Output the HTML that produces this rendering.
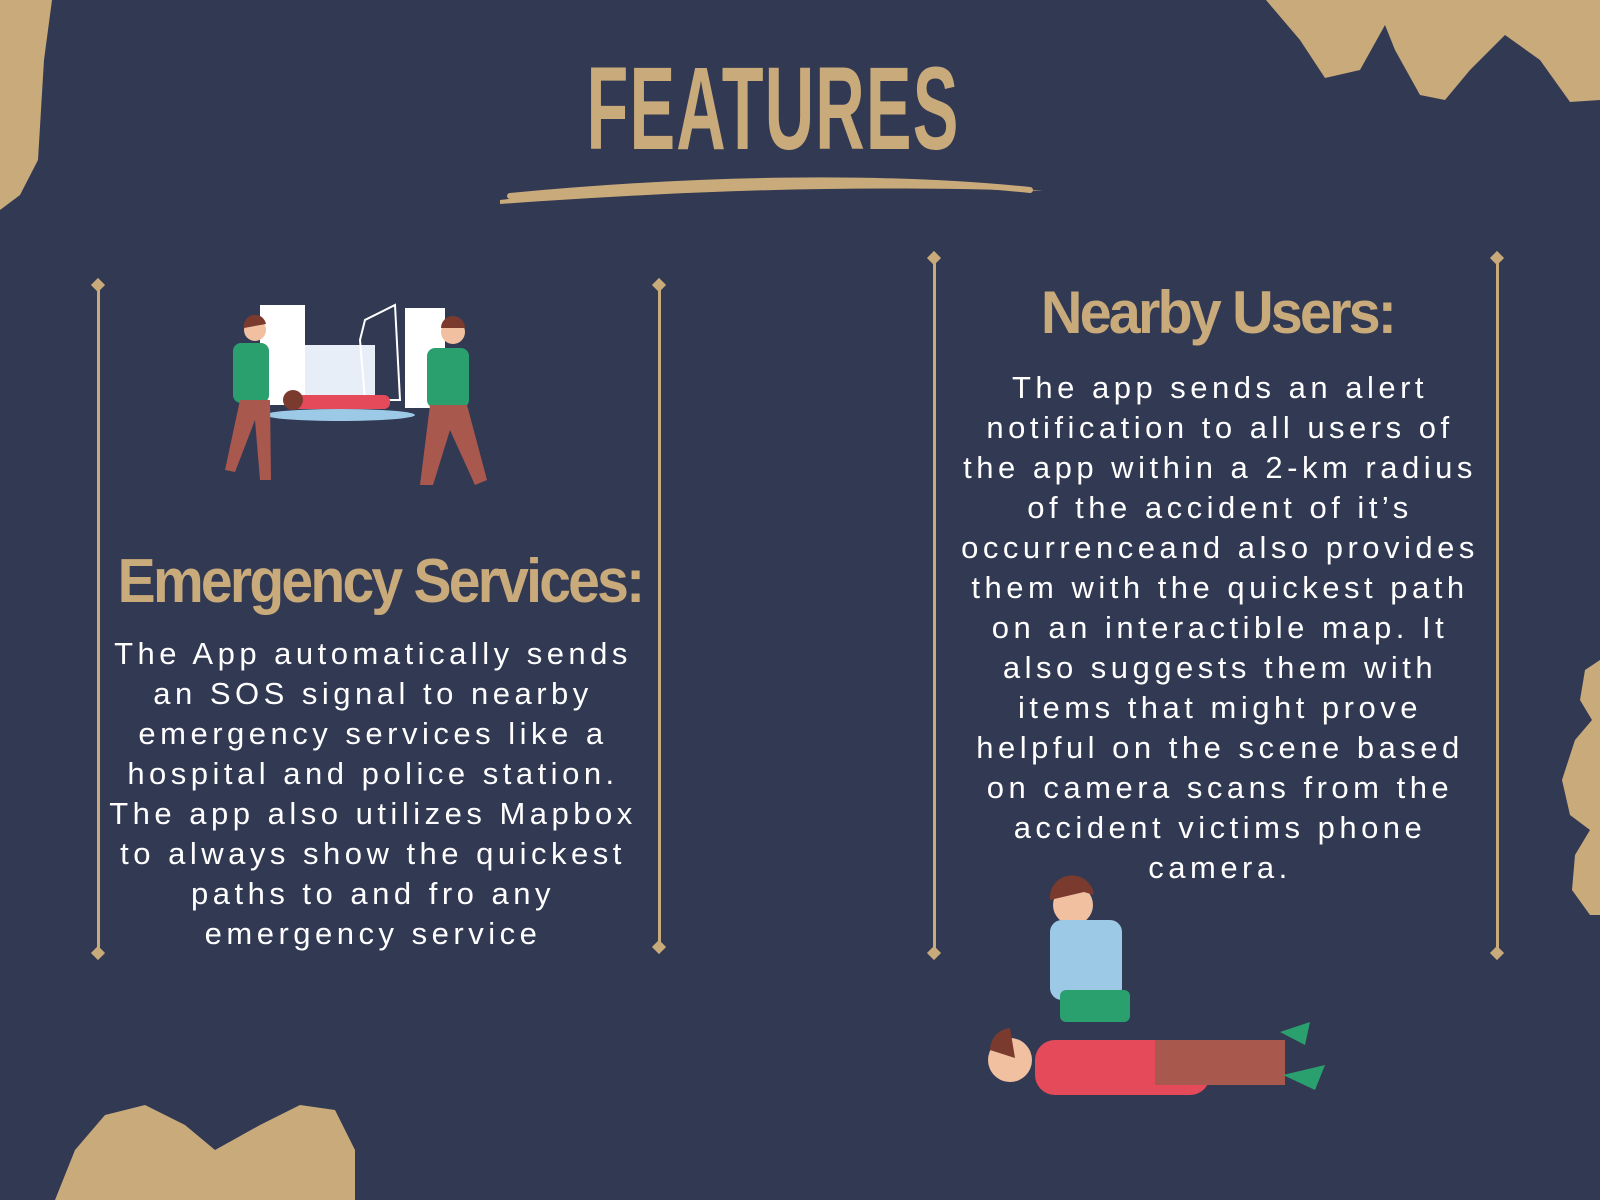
<!DOCTYPE html>
<html><head><meta charset="utf-8"><style>
html,body{margin:0;padding:0}
body{width:1600px;height:1200px;background:#323953;position:relative;overflow:hidden;font-family:"Liberation Sans",sans-serif}
.vl{position:absolute;width:3px;background:#c9aa7a}
.dm{position:absolute;width:10px;height:10px;background:#c9aa7a;transform:rotate(45deg)}
.title{position:absolute;left:-27px;width:1600px;text-align:center;top:44px;font-size:118px;font-weight:bold;color:#c9aa7a;transform:scaleX(0.58);letter-spacing:2px;line-height:130px}
.h{position:absolute;text-align:center;color:#c9aa7a;font-weight:bold;letter-spacing:-3px;white-space:nowrap}
.p{position:absolute;text-align:center;color:#fff;font-size:31px;line-height:40px;letter-spacing:4.5px;font-weight:normal;white-space:nowrap}
</style></head><body>
<svg width="1600" height="1200" style="position:absolute;left:0;top:0">
<path d="M0 0 L52 0 L44 60 L38 160 L20 195 L0 210 Z" fill="#c9aa7a"/>
<path d="M1266 0 L1600 0 L1600 100 L1570 102 L1540 60 L1505 35 L1470 70 L1445 100 L1420 95 L1395 50 L1385 25 L1360 70 L1325 78 L1300 40 Z" fill="#c9aa7a"/>
<path d="M1600 660 L1585 670 L1580 700 L1592 720 L1575 740 L1562 780 L1570 815 L1590 830 L1575 855 L1572 890 L1590 915 L1600 915 Z" fill="#c9aa7a"/>
<path d="M55 1200 L75 1150 L105 1115 L145 1105 L185 1125 L215 1150 L260 1125 L300 1105 L335 1110 L355 1150 L355 1200 Z" fill="#c9aa7a"/>
<path d="M500 200 C650 180 850 170 1043 191 C850 185 700 190 500 204 Z" fill="#c9aa7a"/>
<path d="M510 196 C700 178 880 175 1030 190" stroke="#c9aa7a" stroke-width="6" fill="none" stroke-linecap="round"/>
</svg>
<div class="title">FEATURES</div>
<div class="vl" style="left:97px;top:284px;height:670px"></div><div class="dm" style="left:93px;top:280px"></div><div class="dm" style="left:93px;top:948px"></div>
<div class="vl" style="left:658px;top:284px;height:664px"></div><div class="dm" style="left:654px;top:280px"></div><div class="dm" style="left:654px;top:942px"></div>
<div class="vl" style="left:933px;top:257px;height:696px"></div><div class="dm" style="left:929px;top:253px"></div><div class="dm" style="left:929px;top:948px"></div>
<div class="vl" style="left:1496px;top:257px;height:696px"></div><div class="dm" style="left:1492px;top:253px"></div><div class="dm" style="left:1492px;top:948px"></div>
<svg width="320" height="210" style="position:absolute;left:205px;top:300px">
<rect x="55" y="5" width="45" height="100" fill="#fff"/>
<rect x="100" y="45" width="70" height="60" fill="#e8eef8"/>
<rect x="200" y="8" width="40" height="100" fill="#fff"/>
<path d="M155 40 L160 20 L190 5 L195 100 L160 100 Z" fill="none" stroke="#fff" stroke-width="2"/>
<ellipse cx="135" cy="115" rx="75" ry="6" fill="#9cc9e6"/>
<rect x="85" y="95" width="100" height="14" rx="6" fill="#e54a5a"/>
<circle cx="88" cy="100" r="10" fill="#7a3a2e"/>
<circle cx="50" cy="30" r="11" fill="#f0c0a0"/><path d="M39 28 a11 11 0 0 1 22 -4 z" fill="#7a3a2e"/>
<rect x="28" y="43" width="36" height="60" rx="8" fill="#2aa06e"/>
<path d="M35 100 L20 170 L30 172 L50 120 L55 180 L66 180 L65 100 Z" fill="#a9584e"/>
<circle cx="248" cy="32" r="12" fill="#f0c0a0"/><path d="M236 28 a12 12 0 0 1 24 0 z" fill="#7a3a2e"/>
<rect x="222" y="48" width="42" height="60" rx="8" fill="#2aa06e"/>
<path d="M225 105 L215 185 L228 185 L245 130 L270 185 L282 180 L262 105 Z" fill="#a9584e"/>
</svg>
<div class="h" style="left:80px;width:600px;top:545px;font-size:62px;line-height:74px;transform:scaleX(0.92)">Emergency Services:</div>
<div class="p" style="left:73px;width:600px;top:634px">The App automatically sends<br>an SOS signal to nearby<br>emergency services like a<br>hospital and police station.<br>The app also utilizes Mapbox<br>to always show the quickest<br>paths to and fro any<br>emergency service</div>
<div class="h" style="left:980px;width:475px;top:278px;font-size:60px;line-height:70px;transform:scaleX(0.96)">Nearby Users:</div>
<div class="p" style="left:920px;width:600px;top:368px">The app sends an alert<br>notification to all users of<br>the app within a 2-km radius<br>of the accident of it’s<br>occurrenceand also provides<br>them with the quickest path<br>on an interactible map. It<br>also suggests them with<br>items that might prove<br>helpful on the scene based<br>on camera scans from the<br>accident victims phone<br>camera.</div>
<svg width="380" height="260" style="position:absolute;left:965px;top:870px">
<circle cx="108" cy="35" r="20" fill="#f0c0a0"/><path d="M85 30 a22 22 0 0 1 44 -5 l-10 -3 z" fill="#7a3a2e"/>
<rect x="85" y="50" width="72" height="80" rx="12" fill="#9cc9e6"/>
<rect x="95" y="120" width="70" height="32" rx="6" fill="#2aa06e"/>
<rect x="70" y="170" width="175" height="55" rx="20" fill="#e54a5a"/>
<rect x="190" y="170" width="130" height="45" fill="#a9584e"/>
<circle cx="45" cy="190" r="22" fill="#f0c0a0"/><path d="M25 180 a22 22 0 0 1 20 -22 l5 30 z" fill="#7a3a2e"/>
<path d="M315 162 L345 152 L340 175 Z M318 205 L360 195 L350 220 Z" fill="#2aa06e"/>
</svg>
</body></html>
